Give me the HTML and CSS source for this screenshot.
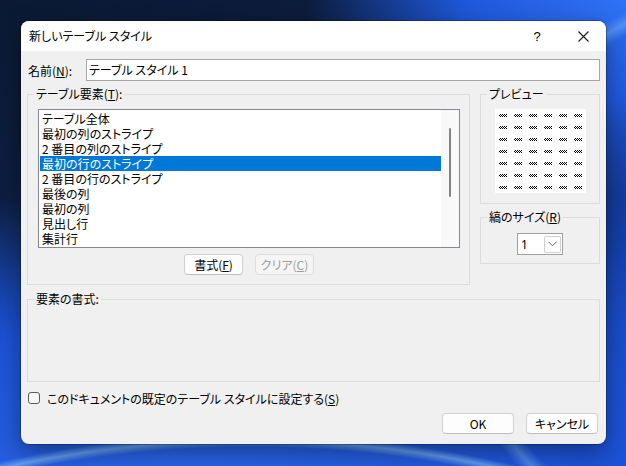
FILE: index.html
```html
<html lang="ja">
<head>
    <meta charset="UTF-8">
    <title>新しいテーブル スタイル</title>
    <link rel="stylesheet" href="styles.css">
</head>
<body>
    <div class="dialog">
        <div class="titlebar">
            <span class="title">新しいテーブル スタイル</span>
            <span class="tb-btn help">?</span>
            <span class="tb-btn">
                <svg width="11" height="11" viewBox="0 0 11 11"><path d="M0.5 0.5 L10.5 10.5 M10.5 0.5 L0.5 10.5" stroke="#1a1a1a" stroke-width="1.1" fill="none"/></svg>
            </span>
        </div>

        <div class="content">
            <div class="name-row">
                <label class="name-label">名前(<u>N</u>):</label>
                <div class="textbox">テーブル スタイル 1</div>
            </div>

            <div class="middle">
                <fieldset class="group elements">
                    <legend>テーブル要素(<u>T</u>):</legend>
                    <div class="elements-body">
                        <div class="listbox">
                            <ul class="items">
                                <li>テーブル全体</li>
                                <li>最初の列のストライプ</li>
                                <li>2 番目の列のストライプ</li>
                                <li class="selected">最初の行のストライプ</li>
                                <li>2 番目の行のストライプ</li>
                                <li>最後の列</li>
                                <li>最初の列</li>
                                <li>見出し行</li>
                                <li>集計行</li>
                            </ul>
                            <div class="scrollbar"><div class="thumb"></div></div>
                        </div>
                        <div class="list-buttons">
                            <button class="btn">書式(<u>F</u>)</button>
                            <button class="btn" disabled>クリア(<u>C</u>)</button>
                        </div>
                    </div>
                </fieldset>

                <div class="side">
                    <fieldset class="group preview">
                        <legend>プレビュー</legend>
                        <div class="preview-box">
                            <span></span><span></span><span></span><span></span><span></span><span></span>
                            <span></span><span></span><span></span><span></span><span></span><span></span>
                            <span></span><span></span><span></span><span></span><span></span><span></span>
                            <span></span><span></span><span></span><span></span><span></span><span></span>
                            <span></span><span></span><span></span><span></span><span></span><span></span>
                            <span></span><span></span><span></span><span></span><span></span><span></span>
                            <span></span><span></span><span></span><span></span><span></span><span></span>
                        </div>
                    </fieldset>

                    <fieldset class="group stripe">
                        <legend>縞のサイズ(<u>R</u>)</legend>
                        <div class="combo">
                            <span class="combo-value">1</span>
                            <span class="combo-arrow">
                                <svg width="9" height="6" viewBox="0 0 9 6"><path d="M0.5 0.8 L4.5 4.8 L8.5 0.8" stroke="#606060" stroke-width="1" fill="none"/></svg>
                            </span>
                        </div>
                    </fieldset>
                </div>
            </div>

            <fieldset class="group format">
                <legend>要素の書式:</legend>
                <div class="format-area"></div>
            </fieldset>

            <label class="check-row">
                <span class="checkbox"></span>
                <span>このドキュメントの既定のテーブル スタイルに設定する(<u>S</u>)</span>
            </label>

            <div class="footer">
                <button class="btn wide">OK</button>
                <button class="btn wide">キャンセル</button>
            </div>
        </div>
    </div>
</body>
</html>
```

FILE: styles.css
```css
body {
    margin: 0;
    width: 626px;
    height: 466px;
    overflow: hidden;
    font-family: "Noto Sans CJK JP", "Noto Sans", sans-serif;
    font-size: 12px;
    font-feature-settings: "palt";
    color: #000;
    background:
        radial-gradient(ellipse 900px 420px at 40% 150%, rgba(0,0,0,0) 60%, rgba(150,210,255,0.55) 61.5%, rgba(0,0,0,0) 63%),
        radial-gradient(ellipse 600px 500px at 130% 60%, rgba(0,0,0,0) 58%, rgba(120,180,255,0.5) 60%, rgba(0,0,0,0) 62%),
        radial-gradient(ellipse 320px 200px at 100% 0%, #2f72f5 0%, #1f58dc 50%, rgba(20,60,170,0) 100%),
        radial-gradient(ellipse 760px 300px at 30% 105%, #2b66e8 0%, #1c52d6 55%, rgba(20,70,200,0) 100%),
        linear-gradient(160deg, #0b1933 0%, #0d2046 38%, #133c9e 62%, #1b55da 100%);
}

.dialog {
    margin: 21px 0 0 21px;
    width: 585px;
    height: 423px;
    box-sizing: border-box;
    background: #f0f0f0;
    border-radius: 8px;
    overflow: hidden;
    box-shadow: 0 0 0 1px rgba(0, 0, 0, 0.25), 0 8px 24px rgba(0, 0, 0, 0.4);
}

.titlebar {
    height: 30px;
    background: #fff;
    display: flex;
    align-items: center;
    padding-left: 8px;
}

.title {
    flex: 1;
    line-height: 16px;
}

.tb-btn {
    width: 46px;
    height: 30px;
    display: flex;
    align-items: center;
    justify-content: center;
}

.help {
    font-family: "Liberation Sans", sans-serif;
    font-size: 13px;
    padding-top: 1px;
}

.content {
    padding: 8px 6px 10px 6px;
}

.name-row {
    display: flex;
    align-items: center;
    height: 22px;
}

.name-label {
    width: 58px;
    margin-left: 1px;
}

.textbox {
    flex: 1;
    height: 22px;
    box-sizing: border-box;
    border: 1px solid #a6a6a6;
    background: #fff;
    padding-left: 2px;
    line-height: 20px;
}

.middle {
    display: flex;
    gap: 10px;
    margin-top: 5px;
}

.group {
    margin: 0;
    padding: 0;
    border: 1px solid #dcdcdc;
    min-width: 0;
}

.group legend {
    margin-left: 6px;
    padding: 0 2px;
    line-height: 16px;
    height: 16px;
}

.elements {
    width: 443px;
    box-sizing: border-box;
}

.elements-body {
    padding: 0 9px 9px 10px;
}

.listbox {
    margin-top: 7px;
    height: 139px;
    box-sizing: border-box;
    border: 1px solid #828790;
    background: #fff;
    display: flex;
}

.items {
    flex: 1;
    list-style: none;
    margin: 0;
    padding: 1px 0 0 1px;
}

.items li {
    height: 15px;
    line-height: 15px;
    padding-left: 2px;
    white-space: nowrap;
}

.items .selected {
    background: #0078d7;
    color: #fff;
}

.scrollbar {
    width: 18px;
    background: #f9f9f9;
    display: flex;
    justify-content: center;
    padding-top: 18px;
    box-sizing: border-box;
}

.thumb {
    width: 2px;
    height: 69px;
    background: #858585;
    border-radius: 1px;
}

.list-buttons {
    display: flex;
    justify-content: center;
    gap: 12px;
    margin-top: 6px;
}

.btn {
    font-family: inherit;
    font-size: 12px;
    font-feature-settings: "palt";
    width: 59px;
    height: 21px;
    padding: 0;
    line-height: 19px;
    background: #fdfdfd;
    color: #000;
    border: 1px solid #d0d0d0;
    border-bottom-color: #bdbdbd;
    border-radius: 4px;
}

.btn:disabled {
    background: #f5f5f5;
    color: #9d9d9d;
    border-color: #dedede;
}

.btn.wide {
    width: 72px;
}

.side {
    width: 120px;
}

.preview {
    padding-bottom: 10px;
}

.preview-box {
    margin: 7px auto 0;
    width: 91px;
    height: 84px;
    box-sizing: border-box;
    background: #fff;
    padding: 5px 4px;
    display: grid;
    grid-template-columns: repeat(6, 8px);
    grid-auto-rows: 3px;
    column-gap: 7px;
    row-gap: 9px;
}

.preview-box span {
    background: repeating-conic-gradient(#000 0 25%, #fff 0 50%) 0 0 / 2px 2px;
}

.stripe {
    margin-top: 5px;
    padding-bottom: 8px;
}

.combo {
    margin: 8px auto 0;
    width: 46px;
    height: 22px;
    box-sizing: border-box;
    border: 1px solid #a0a0a0;
    background: #fff;
    display: flex;
    align-items: center;
}

.combo-value {
    flex: 1;
    padding-left: 3px;
    font-family: "Noto Sans", sans-serif;
}

.combo-arrow {
    width: 17px;
    height: 17px;
    margin-right: 1px;
    box-sizing: border-box;
    border: 1px solid #cfcfcf;
    border-radius: 2px;
    display: flex;
    align-items: center;
    justify-content: center;
}

.format {
    margin-top: 6px;
}

.format-area {
    height: 74px;
}

.check-row {
    display: flex;
    align-items: center;
    height: 16px;
    margin-top: 8px;
    padding-left: 1px;
}

.checkbox {
    width: 12px;
    height: 12px;
    box-sizing: border-box;
    border: 1px solid #5a5a5a;
    border-radius: 3px;
    background: #f7f7f7;
    margin-right: 7px;
}

.footer {
    display: flex;
    justify-content: flex-end;
    gap: 12px;
    margin-top: 7px;
    padding-right: 2px;
}
```
